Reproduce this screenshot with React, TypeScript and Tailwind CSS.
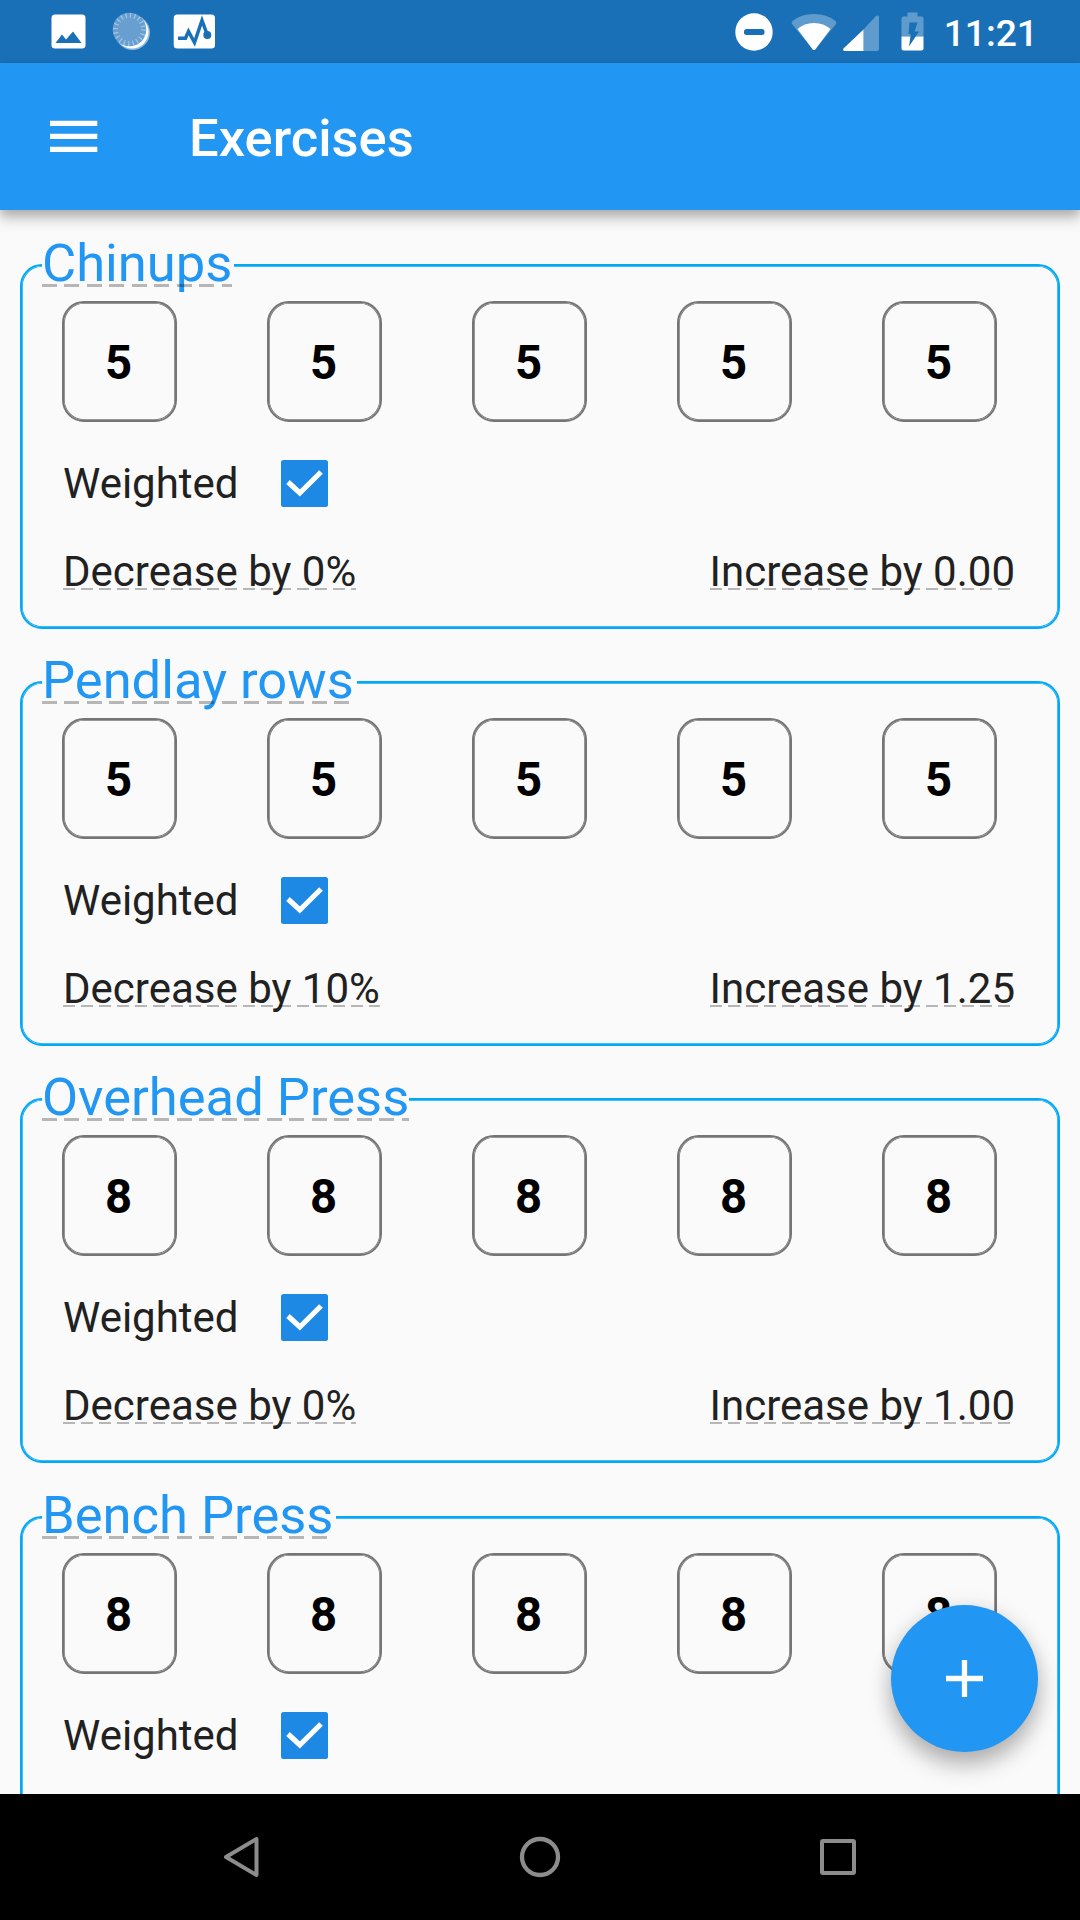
import React from "react";

const exercises = [
  { name: "Chinups", legendWidth: "w-[192px]", reps: [5, 5, 5, 5, 5], dec: "Decrease by 0%", inc: "Increase by 0.00" },
  { name: "Pendlay rows", legendWidth: "w-[315px]", reps: [5, 5, 5, 5, 5], dec: "Decrease by 10%", inc: "Increase by 1.25" },
  { name: "Overhead Press", legendWidth: "w-[367px]", reps: [8, 8, 8, 8, 8], dec: "Decrease by 0%", inc: "Increase by 1.00" },
  { name: "Bench Press", legendWidth: "w-[294px]", reps: [8, 8, 8, 8, 8], dec: "", inc: "" },
];

function StatusBar() {
  return (
    <div className="flex h-[63px] shrink-0 items-center bg-[#1a70b7] pl-[51px] pr-[42px] text-white">
      <svg width="36" height="36" viewBox="0 0 36 36">
        <rect x="0.5" y="0.5" width="34" height="34" rx="3.5" fill="#fff" />
        <path d="M4.500 29L11 20.500L15 25.500L22 17.500L30.500 29Z" fill="#1a70b7" />
      </svg>
      <svg className="ml-[25px]" width="40" height="40" viewBox="0 0 40 40">
        <circle cx="20.500" cy="20.500" r="17.500" fill="#8bb8de" />
        <circle cx="20" cy="20" r="16.500" fill="#fff" />
        <circle cx="17.500" cy="17.500" r="16.800" fill="#689fd0" />
        <circle cx="17.500" cy="17.500" r="14" fill="none" stroke="#a3c5e4" strokeWidth="5" strokeDasharray="1.2 3.198" />
      </svg>
      <svg className="ml-[21px]" width="42" height="36" viewBox="0 0 42 36">
        <rect x="0.700" y="0.500" width="41.300" height="34" rx="3.500" fill="#fff" />
        <path d="M5 24.200H12.500L15.500 17.500L21.500 28.500L29 6.500L34 20" fill="none" stroke="#1a70b7" strokeWidth="3.500" />
        <circle cx="34.300" cy="21" r="4" fill="#1a70b7" />
      </svg>
      <svg className="ml-auto" width="38" height="38" viewBox="0 0 38 38">
        <circle cx="19" cy="19" r="18.700" fill="#fff" />
        <rect x="9" y="16" width="20.500" height="6" rx="2.500" fill="#1a70b7" />
      </svg>
      <svg className="ml-[18px]" width="46" height="38" viewBox="0 0 46 38">
        <path d="M23 37Q22 37 21 35.500L1 11Q0 9.500 1.500 8Q10 1 23 1T44.500 8Q46 9.500 45 11L25 35.500Q24 37 23 37Z" fill="#5f9bcd" />
        <path d="M23 37Q22 37 21 35.500L6.500 16Q13 10 23 10T39.500 16L25 35.500Q24 37 23 37Z" fill="#fff" />
      </svg>
      <svg className="ml-[6px]" width="36" height="38" viewBox="0 0 36 38">
        <path d="M20.500 16.500L33 3Q36 1.500 36 4V36Q36 38 34 38H20.500Z" fill="#5f9bcd" />
        <path d="M20.500 16.500V38H1.500Q-0.500 37.500 0.500 35.500Z" fill="#fff" />
      </svg>
      <svg className="ml-[22px]" width="23" height="39" viewBox="0 0 23 39">
        <path d="M6.500 0.500H16.500V4.500H20.500Q22.500 4.500 22.500 6.500V24.500H0.500V6.500Q0.500 4.500 2.500 4.500H6.500Z" fill="#5f9bcd" />
        <path d="M0.500 24.500H22.500V36.500Q22.500 38.500 20.500 38.500H2.500Q0.500 38.500 0.500 36.500Z" fill="#fff" />
        <path d="M8.500 10.500H16.500L13.500 19.500H18L8 34.500L9.800 22H7.500Z" fill="#1a70b7" />
      </svg>
      <span className="ml-[20px] pt-[2px] text-[37.200px] font-medium leading-[60px]">11:21</span>
    </div>
  );
}

function AppBar() {
  return (
    <div className="relative z-10 flex h-[147px] shrink-0 items-center bg-[#2196f3] pl-[50px] text-white shadow-[0_10px_13px_rgba(0,0,0,0.16),0_4px_10px_rgba(0,0,0,0.2)]">
      <svg width="48" height="33" viewBox="0 0 48 33">
        <path d="M0 3.400H47.300M0 16.400H47.300M0 29.400H47.300" stroke="#fff" strokeWidth="5.400" />
      </svg>
      <h1 className="ml-[91px] pt-[3px] text-[52.500px] font-medium leading-[60px]">Exercises</h1>
    </div>
  );
}

function Dashed({ children, large = false }: { children: React.ReactNode; large?: boolean }) {
  return (
    <span className="relative whitespace-pre">
      {children}
      <span
        className={
          large
            ? "absolute left-0 right-0 top-[52px] h-[2.600px] bg-[repeating-linear-gradient(90deg,rgba(0,0,0,0.27)_0_15px,transparent_15px_22.500px)]"
            : "absolute left-0 right-0 top-[41px] h-[2px] bg-[repeating-linear-gradient(90deg,rgba(0,0,0,0.27)_0_12px,transparent_12px_18px)]"
        }
      />
    </span>
  );
}

function Check() {
  return (
    <div className="ml-[42px] h-[47px] w-[47px] rounded-[2.500px] bg-[#1e88e5]">
      <svg width="47" height="47" viewBox="0 0 47 47">
        <path d="M7 22L18.800 33L40 12" fill="none" stroke="#fff" strokeWidth="5.200" />
      </svg>
    </div>
  );
}

function ExerciseCard({ name, legendWidth, reps, dec, inc }: (typeof exercises)[number]) {
  return (
    <section className="mx-[20px] mb-[52px] h-[365px] shrink-0 rounded-[22px] border-2 border-[#03a9f4] shadow-[inset_0_0_0_0.750px_#03a9f4] nth-3:mb-[53px]">
      <div className="flex h-[60px]">
        <h2 className={"-mt-[33px] ml-[20px] h-[60px] bg-[#fafafa] text-[52.500px] leading-[60px] text-[#2196f3] " + legendWidth}>
          <Dashed large>{name}</Dashed>
        </h2>
      </div>
      <div className="-mt-[25px] ml-[40px] flex gap-[90px]">
        {reps.map((r, i) => (
          <div
            key={i}
            className="flex h-[121px] w-[115px] items-center justify-center rounded-[22px] border-2 border-[#757575] pr-[2px] pt-[4px] text-[47.250px] font-bold text-black shadow-[inset_0_0_0_0.750px_#757575]"
          >
            {r}
          </div>
        ))}
      </div>
      <div className="ml-[41px] mt-[38px] flex h-[47px] items-center text-[42px] leading-[50px] text-[#212121]">
        <span className="pt-px">Weighted</span>
        <Check />
      </div>
      {dec && (
        <div className="ml-[41px] mr-[43px] mt-[40px] flex justify-between text-[42px] leading-[50px] text-[#212121]">
          <Dashed>{dec}</Dashed>
          <Dashed>{inc}</Dashed>
        </div>
      )}
    </section>
  );
}

function NavBar() {
  return (
    <div className="flex h-[126px] shrink-0 items-center justify-between bg-black pl-[222px] pr-[223px]">
      <svg width="38" height="42" viewBox="0 0 38 42">
        <path d="M34.500 3V39L4 21Z" fill="none" stroke="#8c8c8c" strokeWidth="4" strokeLinejoin="round" />
      </svg>
      <svg width="42" height="42" viewBox="0 0 42 42">
        <circle cx="21" cy="21" r="18" fill="none" stroke="#8c8c8c" strokeWidth="4.300" />
      </svg>
      <svg width="38" height="38" viewBox="0 0 38 38">
        <rect x="3" y="3" width="32" height="32" rx="1" fill="none" stroke="#8c8c8c" strokeWidth="4" />
      </svg>
    </div>
  );
}

export default function App() {
  return (
    <div className="relative flex h-[1920px] w-[1080px] flex-col overflow-hidden bg-[#fafafa] font-[Roboto,sans-serif]">
      <StatusBar />
      <AppBar />
      <main className="flex min-h-0 flex-1 flex-col overflow-hidden pt-[54px]">
        {exercises.map((e) => (
          <ExerciseCard key={e.name} {...e} />
        ))}
      </main>
      <button className="absolute bottom-[168px] right-[42px] flex h-[147px] w-[147px] items-center justify-center rounded-full bg-[#2196f3] shadow-[0_14px_22px_rgba(0,0,0,0.24),0_3px_22px_rgba(0,0,0,0.12)]">
        <svg width="37" height="37" viewBox="0 0 37 37">
          <path d="M0 18.500H37M18.500 0V37" stroke="#fff" strokeWidth="5.300" />
        </svg>
      </button>
      <NavBar />
    </div>
  );
}
